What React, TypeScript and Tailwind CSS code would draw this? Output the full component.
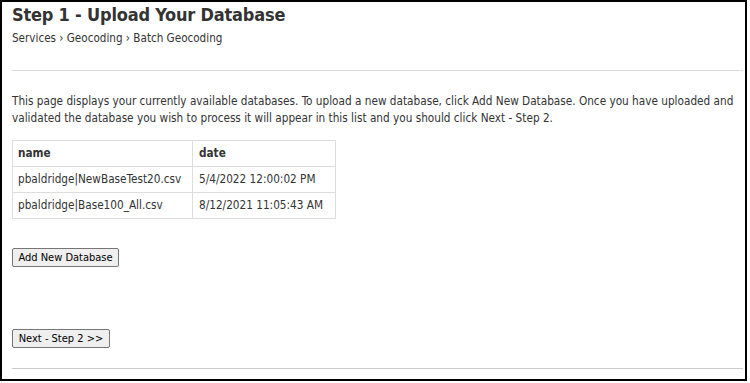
import React from "react";

const rows = [
  { name: "pbaldridge|NewBaseTest20.csv", date: "5/4/2022 12:00:02 PM" },
  { name: "pbaldridge|Base100_All.csv", date: "8/12/2021 11:05:43 AM" },
];

export default function App() {
  return (
    <div className="w-[750px] h-[383px] bg-white overflow-hidden">
      <div
        className="w-[747px] h-[381px] border-2 border-black text-[#333] pl-[10px] pr-[2px]"
        style={{ fontFamily: '"DejaVu Sans Condensed", "DejaVu Sans", sans-serif' }}
      >
        <h1 className="text-[18px] leading-[24px] font-bold mt-[1px] tracking-[-0.2px]">
          Step 1 - Upload Your Database
        </h1>
        <div className="text-[11.6px] leading-[16px] mt-[3px]">
          Services › Geocoding › Batch Geocoding
        </div>
        <div className="h-px bg-[#dddddd] mt-[24px]" />
        <p className="text-[11.7px] leading-[17px] mt-[22px] whitespace-nowrap">
          This page displays your currently available databases. To upload a new database, click Add New Database. Once you have uploaded and
          <br />
          validated the database you wish to process it will appear in this list and you should click Next - Step 2.
        </p>
        <table className="mt-[13px] border-collapse text-[11.7px]">
          <thead>
            <tr className="h-[26px]">
              <th className="border border-[#dddddd] text-left font-bold px-[5px] w-[180px]">name</th>
              <th className="border border-[#dddddd] text-left font-bold px-[6px] w-[143px]">date</th>
            </tr>
          </thead>
          <tbody>
            {rows.map((r) => (
              <tr key={r.name} className="h-[26px]">
                <td className="border border-[#dddddd] px-[5px]">{r.name}</td>
                <td className="border border-[#dddddd] px-[6px]">{r.date}</td>
              </tr>
            ))}
          </tbody>
        </table>
        <div className="mt-[25px]">
          <button className="h-[19px] w-[107px] border border-[#767676] bg-[#efefef] rounded-[2px] text-[11px] text-black leading-none">
            Add New Database
          </button>
        </div>
        <div className="mt-[57px]">
          <button className="h-[19px] w-[98px] border border-[#767676] bg-[#efefef] rounded-[2px] text-[11px] text-black leading-none">
            Next - Step 2 &gt;&gt;
          </button>
        </div>
        <div className="h-px bg-[#cccccc] mt-[19px]" />
      </div>
    </div>
  );
}
